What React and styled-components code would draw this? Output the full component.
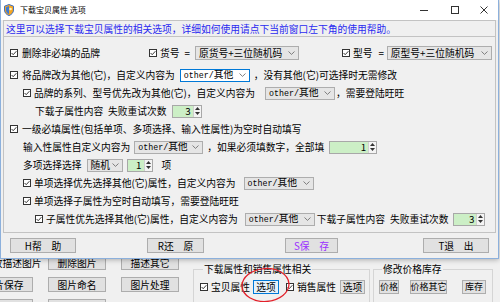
import styled, { createGlobalStyle } from "styled-components";

const GlobalStyle = createGlobalStyle`
  html, body {
    margin: 0;
    padding: 0;
    background: #f0f0f0;
  }
  body {
    font-family: "Noto Sans CJK SC", "Noto Sans", sans-serif;
    font-size: 9.75px;
    line-height: 12px;
    color: #000;
  }
`;

const Desktop = styled.div`
  position: relative;
  width: 500px;
  height: 302px;
  overflow: hidden;
  background: #f0f0f0;
`;

/* ---------- main program window, behind the dialog ---------- */

const AppWindow = styled.div`
  height: 100%;
  box-sizing: border-box;
  padding-top: 255px;
  display: flex;
  align-items: flex-start;
`;

const ButtonGrid = styled.div`
  display: grid;
  grid-template-columns: repeat(3, 58px);
  grid-auto-rows: 15px;
  column-gap: 15px;
  row-gap: 7px;
  margin-left: -25px;
  flex-shrink: 0;
`;

const AppButton = styled.div`
  box-sizing: border-box;
  display: flex;
  align-items: center;
  justify-content: center;
  background: #e1e1e1;
  border: 1px solid #adadad;
  white-space: nowrap;
`;

const AppLabel = styled.div`
  display: flex;
  align-items: center;
  padding-left: 8px;
  white-space: nowrap;
`;

const Group = styled.fieldset`
  box-sizing: border-box;
  width: ${(p) => p.$w}px;
  height: 62px;
  margin: 8px 0 0 ${(p) => p.$ml}px;
  padding: 0 0 0 ${(p) => p.$pl}px;
  border: 1px solid #d5d5d5;
  flex-shrink: 0;
`;

const Legend = styled.legend`
  padding: 0 1px;
  margin-left: 3px;
  line-height: 12px;
`;

const GroupRow = styled.div`
  display: flex;
  align-items: center;
  height: 14px;
  margin-top: 5px;
  white-space: nowrap;
`;

const SmallButton = styled.div`
  box-sizing: border-box;
  width: ${(p) => p.$w}px;
  height: ${(p) => p.$h || 14}px;
  margin-left: ${(p) => p.$ml || 0}px;
  display: flex;
  align-items: center;
  justify-content: center;
  font-size: ${(p) => p.$fs || 9.75}px;
  background: ${(p) => (p.$focus ? "#e5f1fb" : "#e1e1e1")};
  border: 1px solid ${(p) => (p.$focus ? "#0078d7" : "#adadad")};
  flex-shrink: 0;
`;

const Annotation = styled.svg`
  position: absolute;
  left: 240px;
  top: 266px;
  pointer-events: none;
`;

/* ---------- dialog window ---------- */

const Dialog = styled.div`
  position: absolute;
  top: 0;
  left: 0;
  width: 499px;
  box-sizing: border-box;
  border: 1px solid #8cb0dc;
  border-top: 0;
  background: #f0f0f0;
  box-shadow: 0 1px 5px rgba(0, 0, 0, 0.28);
  display: flex;
  flex-direction: column;
`;

const TitleBar = styled.div`
  height: 20px;
  background: #fff;
  display: flex;
  align-items: center;
  padding-left: 3px;
`;

const TitleText = styled.span`
  margin-left: 6px;
  font-size: 8px;
  color: #000;
`;

const WinControls = styled.div`
  margin-left: auto;
  display: flex;
  height: 100%;
`;

const WinBtn = styled.div`
  width: ${(p) => p.$w}px;
  height: 100%;
  display: flex;
  align-items: center;
  justify-content: center;
`;

const InfoBar = styled.div`
  height: 17px;
  box-sizing: border-box;
  margin: 0 2px;
  border: 1px solid #c3c3c3;
  padding-left: 2px;
  display: flex;
  align-items: center;
  color: #2a2af0;
  white-space: nowrap;
`;

const Panel = styled.div`
  margin: 0 2px;
  padding: 7px 0 4px;
  border: 1px solid #c3c3c3;
  border-top: 0;
  display: flex;
  flex-direction: column;
`;

const Row = styled.div`
  display: flex;
  align-items: center;
  height: 18px;
  padding-left: ${(p) => p.$indent - 4}px;
  margin-bottom: ${(p) => p.$mb || 0}px;
  white-space: nowrap;
`;

const Txt = styled.span`
  margin-left: ${(p) => p.$ml || 0}px;
  flex-shrink: 0;
`;

const Latin = styled.span`
  font-family: "Liberation Mono", monospace;
  font-size: 8.3px;
`;

const CheckSvg = styled.svg`
  margin-left: ${(p) => p.$ml || 0}px;
  flex-shrink: 0;
  display: block;
`;

const Combo = styled.div`
  box-sizing: border-box;
  width: ${(p) => p.$w}px;
  height: ${(p) => p.$h || 13}px;
  margin-left: ${(p) => p.$ml || 0}px;
  padding: 0 3px;
  display: flex;
  align-items: center;
  justify-content: space-between;
  background: ${(p) => (p.$focus ? "#fff" : "#e5e5e5")};
  border: 1px solid ${(p) => (p.$focus ? "#0078d7" : "#adadad")};
  flex-shrink: 0;
  overflow: hidden;
`;

const Spin = styled.div`
  box-sizing: border-box;
  width: ${(p) => p.$w}px;
  height: 13px;
  margin-left: ${(p) => p.$ml || 0}px;
  display: flex;
  background: #ccefc6;
  border: 1px solid #a8a8a8;
  flex-shrink: 0;
`;

const SpinValue = styled.span`
  flex: 1;
  text-align: right;
  padding-right: 2px;
  line-height: 11px;
`;

const SpinArrows = styled.span`
  width: 7px;
  display: flex;
  flex-direction: column;
  justify-content: space-evenly;
  align-items: center;
  background: #f4f4f4;
  border-left: 1px solid #d0d0d0;
`;

const ButtonBar = styled.div`
  height: 25px;
  display: flex;
  align-items: center;
`;

const DlgButton = styled.div`
  box-sizing: border-box;
  width: ${(p) => p.$w}px;
  height: 15px;
  margin-left: ${(p) => p.$ml}px;
  display: flex;
  align-items: center;
  justify-content: center;
  background: #e1e1e1;
  border: 1px solid #adadad;
  color: ${(p) => p.$color || "#000"};
  white-space: nowrap;
`;

const Check = ({ ml }) => (
  <CheckSvg $ml={ml} width="8" height="8" viewBox="0 0 8 8">
    <rect x="0.5" y="0.5" width="7" height="7" fill="#fff" stroke="#333" />
    <path d="M1.6 4 L3.2 5.7 L6.4 2.2" fill="none" stroke="#222" strokeWidth="0.9" />
  </CheckSvg>
);

const Chevron = () => (
  <svg width="7" height="4" viewBox="0 0 7 4">
    <path d="M0.5 0.5 L3.5 3.4 L6.5 0.5" fill="none" stroke="#707070" strokeWidth="0.9" />
  </svg>
);

const Select = ({ w, ml, focus, h, children }) => (
  <Combo $w={w} $ml={ml} $focus={focus} $h={h}>
    <span>{children}</span>
    <Chevron />
  </Combo>
);

const Other = () => (
  <>
    <Latin>other/</Latin>其他
  </>
);

const Spinner = ({ w, ml, value }) => (
  <Spin $w={w} $ml={ml}>
    <SpinValue>{value}</SpinValue>
    <SpinArrows>
      <svg width="5" height="3" viewBox="0 0 5 3">
        <path d="M0 3 L2.5 0 L5 3 Z" fill="#333" />
      </svg>
      <svg width="5" height="3" viewBox="0 0 5 3">
        <path d="M0 0 L2.5 3 L5 0 Z" fill="#333" />
      </svg>
    </SpinArrows>
  </Spin>
);

const AppIcon = () => (
  <svg width="10" height="12" viewBox="0 0 10 12">
    <path d="M5 0.5 L9.5 2.2 V6 C9.5 8.8 7.4 10.6 5 11.6 C2.6 10.6 0.5 8.8 0.5 6 V2.2 Z" fill="#f5a623" stroke="#3b6fc4" strokeWidth="1" />
    <path d="M5 2 V10.2 C3.2 9.3 2 8 2 6 V3.2 Z" fill="#3b7ad8" />
    <circle cx="6.6" cy="5" r="1.3" fill="#fff3c0" />
  </svg>
);

export default function App() {
  return (
    <Desktop>
      <GlobalStyle />

      <AppWindow>
        <ButtonGrid>
          <AppLabel>存放描述图片</AppLabel>
          <AppButton>删除图片</AppButton>
          <AppButton>描述其它</AppButton>
          <AppButton>图片保存</AppButton>
          <AppButton>图片命名</AppButton>
          <AppButton>图片处理</AppButton>
          <AppButton />
          <AppButton />
        </ButtonGrid>

        <Group $w={177} $ml={14} $pl={6}>
          <Legend>下载属性和销售属性相关</Legend>
          <GroupRow>
            <Check />
            <Txt $ml={3}>宝贝属性</Txt>
            <SmallButton $w={26} $ml={3} $focus>选项</SmallButton>
            <Check ml={7} />
            <Txt $ml={3}>销售属性</Txt>
            <SmallButton $w={25} $ml={4}>选项</SmallButton>
          </GroupRow>
        </Group>

        <Group $w={120} $ml={3} $pl={5}>
          <Legend>修改价格库存</Legend>
          <GroupRow>
            <SmallButton $w={20} $fs={9}>价格</SmallButton>
            <SmallButton $w={37} $ml={11} $fs={9}>价格其它</SmallButton>
            <SmallButton $w={24} $ml={15} $fs={9}>库存</SmallButton>
          </GroupRow>
        </Group>
      </AppWindow>

      <Annotation width="52" height="38" viewBox="0 0 52 38">
        <ellipse cx="25.5" cy="19" rx="23.5" ry="16.5" fill="none" stroke="#e3202a" strokeWidth="1.3" transform="rotate(-4 25.5 19)" />
      </Annotation>

      <Dialog>
        <TitleBar>
          <AppIcon />
          <TitleText>下载宝贝属性 选项</TitleText>
          <WinControls>
            <WinBtn $w={31}>
              <svg width="8" height="8" viewBox="0 0 8 8">
                <path d="M0 4.5 H8" stroke="#333" strokeWidth="1" />
              </svg>
            </WinBtn>
            <WinBtn $w={31}>
              <svg width="8" height="8" viewBox="0 0 8 8">
                <rect x="0.5" y="0.5" width="7" height="7" fill="none" stroke="#333" strokeWidth="1" />
              </svg>
            </WinBtn>
            <WinBtn $w={28}>
              <svg width="8" height="8" viewBox="0 0 8 8">
                <path d="M0.5 0.5 L7.5 7.5 M7.5 0.5 L0.5 7.5" stroke="#333" strokeWidth="1" />
              </svg>
            </WinBtn>
          </WinControls>
        </TitleBar>

        <InfoBar>这里可以选择下载宝贝属性的相关选项，详细如何使用请点下当前窗口左下角的使用帮助。</InfoBar>

        <Panel>
          <Row $indent={10} $mb={4}>
            <Check />
            <Txt $ml={4}>删除非必填的品牌</Txt>
            <Check ml={49} />
            <Txt $ml={3}>货号</Txt>
            <Txt $ml={5}>=</Txt>
            <Select w={104} ml={5} h={14}>原货号+三位随机码</Select>
            <Check ml={43} />
            <Txt $ml={3}>型号</Txt>
            <Txt $ml={6}>=</Txt>
            <Select w={105} ml={3} h={14}>原型号+三位随机码</Select>
          </Row>

          <Row $indent={10}>
            <Check />
            <Txt $ml={4}>将品牌改为其他(它)，自定义内容为</Txt>
            <Select w={70} ml={5} focus>
              <Other />
            </Select>
            <Txt $ml={4}>，没有其他(它)可选择时无需修改</Txt>
          </Row>

          <Row $indent={23}>
            <Check />
            <Txt $ml={3}>品牌的系列、型号优先改为其他(它)，自定义内容为</Txt>
            <Select w={70} ml={10}>
              <Other />
            </Select>
            <Txt $ml={1}>，需要登陆旺旺</Txt>
          </Row>

          <Row $indent={35}>
            <Txt>下载子属性内容&ensp;失败重试次数</Txt>
            <Spinner w={30} ml={5} value="3" />
          </Row>

          <Row $indent={10}>
            <Check />
            <Txt $ml={4}>一级必填属性(包括单项、多项选择、输入性属性)为空时自动填写</Txt>
          </Row>

          <Row $indent={23}>
            <Txt>输入性属性自定义内容为</Txt>
            <Select w={69} ml={4}>
              <Other />
            </Select>
            <Txt $ml={4}>，如果必须填数字，全部填</Txt>
            <Spinner w={48} ml={5} value="1" />
          </Row>

          <Row $indent={23}>
            <Txt>多项选择选择</Txt>
            <Select w={36} ml={5}>随机</Select>
            <Spinner w={26} ml={4} value="1" />
            <Txt $ml={9}>项</Txt>
          </Row>

          <Row $indent={23}>
            <Check />
            <Txt $ml={3}>单项选择优先选择其他(它)属性，自定义内容为</Txt>
            <Select w={70} ml={8}>
              <Other />
            </Select>
          </Row>

          <Row $indent={23}>
            <Check />
            <Txt $ml={3}>单项选择子属性为空时自动填写，需要登陆旺旺</Txt>
          </Row>

          <Row $indent={35}>
            <Check />
            <Txt $ml={3}>子属性优先选择其他(它)属性，自定义内容为</Txt>
            <Select w={70} ml={7}>
              <Other />
            </Select>
            <Txt $ml={2}>下载子属性内容&ensp;失败重试次数</Txt>
            <Spinner w={32} ml={5} value="3" />
          </Row>
        </Panel>

        <ButtonBar>
          <DlgButton $w={66} $ml={9}>H帮　助</DlgButton>
          <DlgButton $w={57} $ml={71}>R还　原</DlgButton>
          <DlgButton $w={53} $ml={81} $color="#9b30ff">S保　存</DlgButton>
          <DlgButton $w={66} $ml={85}>T退　出</DlgButton>
        </ButtonBar>
      </Dialog>
    </Desktop>
  );
}
